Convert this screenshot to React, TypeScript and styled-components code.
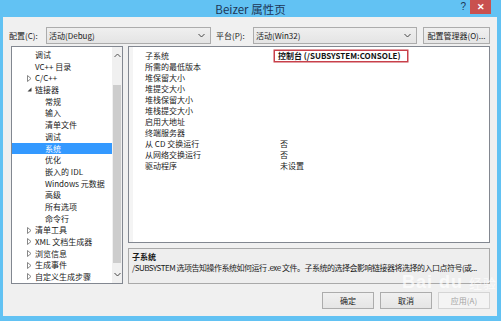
import React from "react";
import styled, { createGlobalStyle } from "styled-components";

const Global = createGlobalStyle`
  html, body { margin: 0; padding: 0; }
  body {
    width: 501px; height: 321px; overflow: hidden;
    background: #62c2f3;
    font-family: "Noto Sans CJK SC", "Noto Sans", sans-serif;
  }
`;

const Window = styled.div`
  position: relative;
  width: 501px;
  height: 321px;
  display: flex;
  flex-direction: column;
  background: #62c2f3;
  overflow: hidden;
`;

const TitleBar = styled.div`
  height: 17px;
  display: grid;
  grid-template-columns: 1fr auto 1fr;
  align-items: center;
`;

const Title = styled.div`
  font-size: 11.5px;
  line-height: 17px;
  color: #1d3656;
  padding-top: 1px;
`;

const Controls = styled.div`
  justify-self: end;
  align-self: start;
  display: flex;
  align-items: flex-start;
  gap: 4px;
  margin-right: 10px;
`;

const Help = styled.span`
  font-family: "Liberation Sans", sans-serif;
  font-size: 10px;
  line-height: 13px;
  color: #1d3656;
`;

const Close = styled.div`
  width: 21px;
  height: 14px;
  background: #c9514f;
  color: #fff;
  display: flex;
  align-items: center;
  justify-content: center;
  font-family: "Liberation Sans", sans-serif;
  font-size: 9px;
  font-weight: bold;
`;

const Body = styled.div`
  flex: 1;
  margin: 0 4px 5px 3px;
  background: #f0f0f0;
  display: flex;
  flex-direction: column;
  padding: 10px 7px 0 6px;
  font-size: 8px;
  color: #1a1a1a;
`;

const ConfigRow = styled.div`
  height: 17px;
  display: flex;
  align-items: center;
`;

const Label = styled.span<{ $ml?: number }>`
  width: 37px;
  margin-left: ${(p) => p.$ml ?? 0}px;
  font-size: 8px;
  line-height: 17px;
  white-space: nowrap;
`;

const Combo = styled.div<{ $w: number }>`
  width: ${(p) => p.$w}px;
  height: 17px;
  box-sizing: border-box;
  border: 1px solid #acacac;
  background: linear-gradient(#efefef, #e4e4e4);
  display: flex;
  align-items: center;
  justify-content: space-between;
  padding: 0 5px 0 2px;
  font-size: 8px;
`;

const Chevron = styled.svg`
  width: 7px;
  height: 5px;
`;

const Button = styled.div<{ $w: number; $disabled?: boolean; $ml?: number }>`
  width: ${(p) => p.$w}px;
  height: 17px;
  margin-left: ${(p) => p.$ml ?? 0}px;
  box-sizing: border-box;
  border: 1px solid ${(p) => (p.$disabled ? "#d5d5d5" : "#acacac")};
  background: ${(p) => (p.$disabled ? "#f4f4f4" : "linear-gradient(#f0f0f0, #e5e5e5)")};
  color: ${(p) => (p.$disabled ? "#a3a3a3" : "#1a1a1a")};
  display: flex;
  align-items: center;
  justify-content: center;
  font-size: 8px;
  white-space: nowrap;
`;

const Main = styled.div`
  margin-top: 2px;
  height: 238px;
  display: flex;
  gap: 5px;
  padding-left: 2px;
`;

const Tree = styled.div`
  width: 112px;
  box-sizing: border-box;
  border: 1px solid #828790;
  background: #fff;
  display: flex;
`;

const TreeList = styled.div`
  flex: 1;
  padding-top: 2px;
  overflow: hidden;
`;

const TreeRow = styled.div<{ $level: number; $selected?: boolean }>`
  height: 11.7px;
  display: flex;
  align-items: center;
  padding-left: ${(p) => p.$level * 10 + 15}px;
  background: ${(p) => (p.$selected ? "#3399ff" : "transparent")};
  color: ${(p) => (p.$selected ? "#fff" : "#1a1a1a")};
  font-size: 8px;
  line-height: 11.7px;
  white-space: nowrap;
`;

const Expander = styled.span`
  width: 8px;
  display: flex;
  align-items: center;
`;

const ScrollBar = styled.div`
  width: 10px;
  background: #f0f0f0;
  display: flex;
  flex-direction: column;
  align-items: center;
`;

const ScrollArrow = styled.div`
  height: 17px;
  display: flex;
  align-items: center;
  justify-content: center;
`;

const Thumb = styled.div`
  width: 8px;
  margin-top: 21px;
  height: 178px;
  background: #cdcdcd;
`;

const Spacer = styled.div`
  flex: 1;
`;

const RightCol = styled.div`
  width: 362px;
  display: flex;
  flex-direction: column;
  gap: 5px;
`;

const Grid = styled.div`
  flex: 1;
  box-sizing: border-box;
  border: 1px solid #828790;
  background: #fff;
  display: flex;
`;

const Margin = styled.div`
  width: 4px;
  background: #f4f4f4;
`;

const GridRows = styled.div`
  flex: 1;
  padding-top: 2.5px;
`;

const GridRow = styled.div`
  height: 11.1px;
  display: grid;
  grid-template-columns: 142px 1fr;
  align-items: center;
  font-size: 8px;
  line-height: 11.1px;
  white-space: nowrap;
`;

const Name = styled.span`
  padding-left: 12px;
`;

const Value = styled.span`
  padding-left: 5px;
`;

const Highlight = styled.span`
  display: inline-block;
  margin-left: -5px;
  padding: 0 7px 0 3px;
  line-height: 10px;
  box-shadow: 0 0 0 1.5px #c8404a;
  font-weight: bold;
  color: #111;
`;

const Desc = styled.div`
  height: 36px;
  box-sizing: border-box;
  border: 1px solid #a9a9a9;
  background: #eeeeee;
  padding: 2px 3px;
  font-size: 8px;
  line-height: 11px;
  white-space: nowrap;
  overflow: hidden;
`;

const DescTitle = styled.div`
  font-weight: bold;
`;

const DescText = styled.div`
  letter-spacing: -0.5px;
`;

const ButtonRow = styled.div`
  margin-top: 8px;
  display: flex;
  justify-content: flex-end;
  gap: 6px;
`;

const Watermark = styled.div`
  position: absolute;
  left: 402px;
  top: 272px;
  font-family: "Liberation Sans", sans-serif;
  font-size: 18px;
  font-weight: bold;
  color: rgba(255, 255, 255, 0.7);
  letter-spacing: 1px;
  pointer-events: none;
  white-space: nowrap;
`;

const WmSmall = styled.span`
  font-family: "Noto Sans CJK SC", sans-serif;
  font-size: 13px;
  font-weight: normal;
`;

type Item = { label: string; level: number; exp?: "open" | "closed"; selected?: boolean };

const treeItems: Item[] = [
  { label: "调试", level: 1 },
  { label: "VC++ 目录", level: 1 },
  { label: "C/C++", level: 1, exp: "closed" },
  { label: "链接器", level: 1, exp: "open" },
  { label: "常规", level: 2 },
  { label: "输入", level: 2 },
  { label: "清单文件", level: 2 },
  { label: "调试", level: 2 },
  { label: "系统", level: 2, selected: true },
  { label: "优化", level: 2 },
  { label: "嵌入的 IDL", level: 2 },
  { label: "Windows 元数据", level: 2 },
  { label: "高级", level: 2 },
  { label: "所有选项", level: 2 },
  { label: "命令行", level: 2 },
  { label: "清单工具", level: 1, exp: "closed" },
  { label: "XML 文档生成器", level: 1, exp: "closed" },
  { label: "浏览信息", level: 1, exp: "closed" },
  { label: "生成事件", level: 1, exp: "closed" },
  { label: "自定义生成步骤", level: 1, exp: "closed" },
];

const props: { name: string; value?: string; hl?: boolean }[] = [
  { name: "子系统", value: "控制台 (/SUBSYSTEM:CONSOLE)", hl: true },
  { name: "所需的最低版本" },
  { name: "堆保留大小" },
  { name: "堆提交大小" },
  { name: "堆栈保留大小" },
  { name: "堆栈提交大小" },
  { name: "启用大地址" },
  { name: "终端服务器" },
  { name: "从 CD 交换运行", value: "否" },
  { name: "从网络交换运行", value: "否" },
  { name: "驱动程序", value: "未设置" },
];

const Down = () => (
  <Chevron viewBox="0 0 7 5">
    <path d="M0.5 1 L3.5 4 L6.5 1" fill="none" stroke="#444" strokeWidth="1" />
  </Chevron>
);

const Up = () => (
  <Chevron viewBox="0 0 7 5">
    <path d="M0.5 4 L3.5 1 L6.5 4" fill="none" stroke="#555" strokeWidth="1" />
  </Chevron>
);

const ExpIcon = ({ kind }: { kind?: "open" | "closed" }) => {
  if (!kind) return <Expander />;
  return (
    <Expander>
      {kind === "closed" ? (
        <svg width="5" height="7" viewBox="0 0 5 7">
          <path d="M0.5 0.5 L4 3.5 L0.5 6.5 Z" fill="none" stroke="#7a7a7a" strokeWidth="0.9" />
        </svg>
      ) : (
        <svg width="5" height="5" viewBox="0 0 5 5">
          <path d="M4.5 0.5 L4.5 4.5 L0.5 4.5 Z" fill="#404040" />
        </svg>
      )}
    </Expander>
  );
};

export default function App() {
  return (
    <Window>
      <Global />
      <TitleBar>
        <div />
        <Title>Beizer 属性页</Title>
        <Controls>
          <Help>?</Help>
          <Close>✕</Close>
        </Controls>
      </TitleBar>
      <Body>
        <ConfigRow>
          <Label>配置(C):</Label>
          <Combo $w={165}>
            <span>活动(Debug)</span>
            <Down />
          </Combo>
          <Label $ml={5}>平台(P):</Label>
          <Combo $w={164}>
            <span>活动(Win32)</span>
            <Down />
          </Combo>
          <Button $w={67} $ml={6}>配置管理器(O)...</Button>
        </ConfigRow>
        <Main>
          <Tree>
            <TreeList>
              {treeItems.map((it, i) => (
                <TreeRow key={i} $level={it.level - 1} $selected={it.selected}>
                  <ExpIcon kind={it.exp} />
                  {it.label}
                </TreeRow>
              ))}
            </TreeList>
            <ScrollBar>
              <ScrollArrow>
                <Up />
              </ScrollArrow>
              <Thumb />
              <Spacer />
              <ScrollArrow>
                <Down />
              </ScrollArrow>
            </ScrollBar>
          </Tree>
          <RightCol>
            <Grid>
              <Margin />
              <GridRows>
                {props.map((p, i) => (
                  <GridRow key={i}>
                    <Name>{p.name}</Name>
                    <Value>{p.hl ? <Highlight>{p.value}</Highlight> : p.value}</Value>
                  </GridRow>
                ))}
              </GridRows>
            </Grid>
            <Desc>
              <DescTitle>子系统</DescTitle>
              <DescText>/SUBSYSTEM 选项告知操作系统如何运行 .exe 文件。子系统的选择会影响链接器将选择的入口点符号(或...</DescText>
            </Desc>
          </RightCol>
        </Main>
        <ButtonRow>
          <Button $w={52}>确定</Button>
          <Button $w={52}>取消</Button>
          <Button $w={52} $disabled>应用(A)</Button>
        </ButtonRow>
      </Body>
      <Watermark>
        Bai du <WmSmall>经验</WmSmall>
      </Watermark>
    </Window>
  );
}
